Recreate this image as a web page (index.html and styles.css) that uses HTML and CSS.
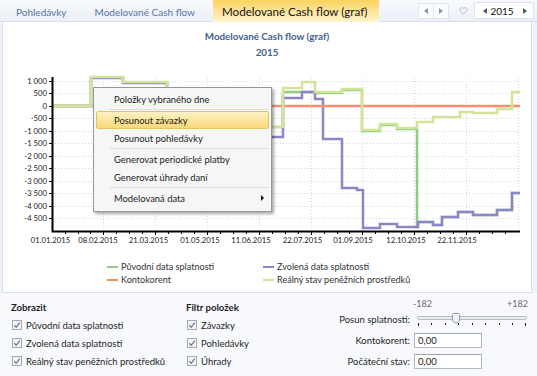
FILE: index.html
```html
<!DOCTYPE html>
<html lang="cs">
<head>
<meta charset="utf-8">
<title>Modelované Cash flow (graf)</title>
<link rel="stylesheet" href="styles.css">
</head>
<body>
<div class="app">
  <div class="tabbar">
    <div class="tab">Pohledávky</div>
    <div class="tab">Modelované Cash flow</div>
    <div class="tab active">Modelované Cash flow (graf)</div>
    <div class="nav">
      <div class="btngroup">
        <span class="nb"><svg width="4" height="6" viewBox="0 0 4 6"><path d="M4 0 L0 3 L4 6 Z" fill="#8d98a8"/></svg></span>
        <span class="nb"><svg width="4" height="6" viewBox="0 0 4 6"><path d="M0 0 L4 3 L0 6 Z" fill="#8d98a8"/></svg></span>
      </div>
      <span class="heart"><svg width="9" height="8" viewBox="0 0 9 8"><path d="M4.5 7.2 L1.2 3.9 A1.9 1.9 0 0 1 4.5 1.6 A1.9 1.9 0 0 1 7.8 3.9 Z" fill="none" stroke="#b7c0cf" stroke-width="1"/></svg></span>
      <div class="year">
        <svg width="4" height="6" viewBox="0 0 4 6"><path d="M4 0 L0 3 L4 6 Z" fill="#4b5563"/></svg>
        <span class="yv">2015</span>
        <svg width="4" height="6" viewBox="0 0 4 6"><path d="M0 0 L4 3 L0 6 Z" fill="#4b5563"/></svg>
      </div>
    </div>
  </div>

  <div class="chart">
    <div class="title">Modelované Cash flow (graf)</div>
    <div class="title">2015</div>
    <svg class="plot" width="528" height="190" viewBox="3 60 528 190">
      <g stroke="#d6d6d6" stroke-width="1" stroke-dasharray="1 2" fill="none">
        <path d="M52 81.5H520M52 93.5H520M52 106.5H520M52 118.5H520M52 131.5H520M52 143.5H520M52 156.5H520M52 168.5H520M52 181.5H520M52 193.5H520M52 206.5H520M52 218.5H520"/>
        <path d="M103.5 78V231M155.5 78V231M207.5 78V231M259.5 78V231M311.5 78V231M362.5 78V231M414.5 78V231M466.5 78V231M518.5 78V231"/>
      </g>
      <g fill="none" stroke-width="2.5" stroke-linejoin="miter">
        <path stroke="#8fcd86" d="M52 106H91V77.5H123V82.5H167V113H271V127H283V92H315V93H342V90H362V131H380V125H397V129H417V227H418V222H433V225H442V217H458V212H473V215H497V210H512V193H520"/>
        <path stroke="#8a86c7" d="M52 106H91V78H123V83H167V137H283V98H302V92H315V99H323V139H342V188H357V190H363V228H380V224H397V227H418V222H433V225H442V217H458V212H473V215H497V210H512V193H520"/>
        <path stroke="#f2906f" d="M52 106H520"/>
        <path stroke="#d2e497" d="M52 106H91V77H123V82H167V113H271V127H283V88H302V82H315V92H342V89H362V130H380V124H397V128H417V122H433V117H460V112H473V113H497V109H512V92H520"/>
      </g>
      <g stroke="#000" stroke-width="1" fill="none">
        <path d="M49 81.5H52M49 93.5H52M49 106.5H52M49 118.5H52M49 131.5H52M49 143.5H52M49 156.5H52M49 168.5H52M49 181.5H52M49 193.5H52M49 206.5H52M49 218.5H52"/>
        <path d="M65.5 231V234M78.5 231V234M90.5 231V234M103.5 231V235M116.5 231V234M129.5 231V234M142.5 231V234M155.5 231V235M168.5 231V234M181.5 231V234M194.5 231V234M207.5 231V235M220.5 231V234M233.5 231V234M246.5 231V234M259.5 231V235M272.5 231V234M285.5 231V234M298.5 231V234M311.5 231V235M324.5 231V234M337.5 231V234M349.5 231V234M362.5 231V235M375.5 231V234M388.5 231V234M401.5 231V234M414.5 231V235M427.5 231V234M440.5 231V234M453.5 231V234M466.5 231V235M479.5 231V234M492.5 231V234M505.5 231V234"/>
      </g>
      <path d="M52.5 77V231.5H520" stroke="#000" stroke-width="2" fill="none"/>
      <g class="ylab" text-anchor="end">
        <text x="47" y="84.3">1 000</text>
        <text x="47" y="96.3">500</text>
        <text x="47" y="109.3">0</text>
        <text x="47" y="121.3">-500</text>
        <text x="47" y="134.3">-1 000</text>
        <text x="47" y="146.3">-1 500</text>
        <text x="47" y="159.3">-2 000</text>
        <text x="47" y="171.3">-2 500</text>
        <text x="47" y="184.3">-3 000</text>
        <text x="47" y="196.3">-3 500</text>
        <text x="47" y="209.3">-4 000</text>
        <text x="47" y="221.3">-4 500</text>
      </g>
      <g class="xlab" text-anchor="middle">
        <text x="50.5" y="243">01.01.2015</text>
        <text x="98" y="243">08.02.2015</text>
        <text x="148.5" y="243">21.03.2015</text>
        <text x="200" y="243">01.05.2015</text>
        <text x="251" y="243">11.06.2015</text>
        <text x="302.5" y="243">22.07.2015</text>
        <text x="353" y="243">01.09.2015</text>
        <text x="406" y="243">12.10.2015</text>
        <text x="457" y="243">22.11.2015</text>
      </g>
    </svg>
    <div class="legend">
      <div class="li"><i class="sw green"></i>Původní data splatnosti</div>
      <div class="li"><i class="sw purple"></i>Zvolená data splatnosti</div>
      <div class="li"><i class="sw orange"></i>Kontokorent</div>
      <div class="li"><i class="sw yellow"></i>Reálný stav peněžních prostředků</div>
    </div>

    <div class="menu">
      <div class="mi">Položky vybraného dne</div>
      <div class="sep"></div>
      <div class="mi hot">Posunout závazky</div>
      <div class="mi">Posunout pohledávky</div>
      <div class="sep"></div>
      <div class="mi">Generovat periodické platby</div>
      <div class="mi">Generovat úhrady daní</div>
      <div class="sep"></div>
      <div class="mi sub">Modelovaná data<svg width="3" height="6" viewBox="0 0 3 6"><path d="M0 0 L3 3 L0 6 Z" fill="#111"/></svg></div>
    </div>
  </div>

  <div class="bottom">
    <div class="col col1">
      <div class="hd">Zobrazit</div>
      <label class="cb"><svg class="box" width="10" height="10" viewBox="0 0 10 10"><rect x="0.5" y="0.5" width="9" height="9" fill="#f3f5f8" stroke="#a3a9b3"/><path d="M2.3 5.2 L4.2 7.3 L7.8 2.6" fill="none" stroke="#6d7c95" stroke-width="1.3"/></svg>Původní data splatnosti</label>
      <label class="cb"><svg class="box" width="10" height="10" viewBox="0 0 10 10"><rect x="0.5" y="0.5" width="9" height="9" fill="#f3f5f8" stroke="#a3a9b3"/><path d="M2.3 5.2 L4.2 7.3 L7.8 2.6" fill="none" stroke="#6d7c95" stroke-width="1.3"/></svg>Zvolená data splatnosti</label>
      <label class="cb"><svg class="box" width="10" height="10" viewBox="0 0 10 10"><rect x="0.5" y="0.5" width="9" height="9" fill="#f3f5f8" stroke="#a3a9b3"/><path d="M2.3 5.2 L4.2 7.3 L7.8 2.6" fill="none" stroke="#6d7c95" stroke-width="1.3"/></svg>Reálný stav peněžních prostředků</label>
    </div>
    <div class="col col2">
      <div class="hd">Filtr položek</div>
      <label class="cb"><svg class="box" width="10" height="10" viewBox="0 0 10 10"><rect x="0.5" y="0.5" width="9" height="9" fill="#f3f5f8" stroke="#a3a9b3"/><path d="M2.3 5.2 L4.2 7.3 L7.8 2.6" fill="none" stroke="#6d7c95" stroke-width="1.3"/></svg>Závazky</label>
      <label class="cb"><svg class="box" width="10" height="10" viewBox="0 0 10 10"><rect x="0.5" y="0.5" width="9" height="9" fill="#f3f5f8" stroke="#a3a9b3"/><path d="M2.3 5.2 L4.2 7.3 L7.8 2.6" fill="none" stroke="#6d7c95" stroke-width="1.3"/></svg>Pohledávky</label>
      <label class="cb"><svg class="box" width="10" height="10" viewBox="0 0 10 10"><rect x="0.5" y="0.5" width="9" height="9" fill="#f3f5f8" stroke="#a3a9b3"/><path d="M2.3 5.2 L4.2 7.3 L7.8 2.6" fill="none" stroke="#6d7c95" stroke-width="1.3"/></svg>Úhrady</label>
    </div>
    <div class="params">
      <span></span>
      <div class="range"><span>-182</span><span>+182</span></div>
      <span class="lbl">Posun splatnosti:</span>
      <svg class="slider" width="114" height="20" viewBox="0 0 114 20">
        <rect x="3.5" y="5.5" width="109" height="3" rx="1" fill="#e9ecf0" stroke="#b5bcc6"/>
        <path d="M4.5 12V15M17.5 12V14M31.5 12V14M44.5 12V14M58.5 12V14M71.5 12V14M85.5 12V14M98.5 12V14M111.5 12V15" stroke="#222" stroke-width="1"/>
        <path d="M39.5 2.5 H44.5 Q45.5 2.5 45.5 3.5 V10 L42 12.5 L38.5 10 V3.5 Q38.5 2.5 39.5 2.5 Z" fill="#eef2f7" stroke="#8e9bb0"/>
      </svg>
      <span class="lbl">Kontokorent:</span>
      <div class="inp">0,00</div>
      <span class="lbl">Počáteční stav:</span>
      <div class="inp">0,00</div>
    </div>
  </div>
</div>
</body>
</html>
```

FILE: styles.css
```css
html, body {
  margin: 0;
  padding: 0;
}
body {
  background: #eef3f9;
  font-family: Lato, "Open Sans", sans-serif;
  color: #1e1e1e;
}
.app {
  width: 537px;
  height: 376px;
  display: flex;
  flex-direction: column;
  overflow: hidden;
}

/* tab bar */
.tabbar {
  height: 21px;
  border-bottom: 1px solid #d6dfea;
  background: linear-gradient(#f8fafd, #ebf0f7);
  display: flex;
  align-items: stretch;
  padding-left: 2px;
}
.tab {
  padding: 2px 14px 0 14px;
  font-size: 10px;
  color: #5675a4;
  display: flex;
  align-items: center;
  white-space: nowrap;
}
.tab.active {
  height: 22px;
  box-sizing: border-box;
  margin-left: 4px;
  padding: 1px 12px 0 9px;
  font-size: 11.6px;
  color: #141414;
  background: linear-gradient(#fbd25e, #fde6a0 55%, #fff3ca);
}
.nav {
  margin-left: auto;
  display: flex;
  align-items: center;
  padding-right: 3px;
}
.btngroup {
  display: flex;
  border: 1px solid #dfe5ee;
  background: #f9fbfd;
}
.nb {
  width: 14px;
  height: 14px;
  display: flex;
  align-items: center;
  justify-content: center;
}
.nb + .nb {
  border-left: 1px solid #e4e9f0;
}
.heart {
  margin-left: 10px;
  width: 9px;
  height: 8px;
  display: flex;
}
.year {
  margin-left: 6px;
  width: 60px;
  height: 17px;
  box-sizing: border-box;
  border: 1px solid #dde4ee;
  background: #fff;
  display: flex;
  align-items: center;
  justify-content: space-between;
  padding: 0 6px 0 8px;
}
.yv {
  font-size: 10px;
  color: #111;
  margin-left: -6px;
}

/* chart */
.chart {
  position: relative;
  margin: 0 5px 0 2px;
  background: #fff;
  border: 1px solid #d6dfea;
  border-top: none;
  padding: 6px 0 6px 0;
}
.title {
  text-align: center;
  font-size: 9.8px;
  line-height: 16px;
  font-weight: bold;
  color: #3f5f8e;
}
.plot {
  display: block;
}
.plot text {
  font-family: Lato, "Open Sans", sans-serif;
  font-size: 7.7px;
  fill: #222;
}
.legend {
  display: grid;
  grid-template-columns: 156px 200px;
  margin-left: 104px;
  padding-top: 10px;
}
.li {
  height: 13px;
  display: flex;
  align-items: center;
  font-size: 9.1px;
  color: #333;
  white-space: nowrap;
}
.sw {
  display: inline-block;
  width: 11px;
  height: 2px;
  margin-right: 3px;
}
.sw.green { background: #8fcd86; }
.sw.purple { background: #8a86c7; }
.sw.orange { background: #f2906f; }
.sw.yellow { background: #d2e497; }

/* context menu */
.menu {
  position: absolute;
  left: 90px;
  top: 65px;
  width: 173px;
  padding: 2px 2px 4px 2px;
  background: #f6f6f6;
  border: 1px solid #979797;
  box-shadow: 2px 2px 3px rgba(0, 0, 0, 0.35);
}
.mi {
  height: 18px;
  box-sizing: border-box;
  padding-left: 18px;
  padding-right: 5px;
  display: flex;
  align-items: center;
  font-size: 9.4px;
  color: #1b1b1b;
  white-space: nowrap;
}
.mi.hot {
  background: linear-gradient(#fdf1c6, #f9d878);
  border: 1px solid #e7c461;
  border-radius: 2px;
  padding-left: 17px;
}
.mi.sub {
  justify-content: space-between;
}
.sep {
  height: 0;
  margin: 1px 0 1px 14px;
  border-top: 1px solid #dedede;
}

/* bottom panel */
.bottom {
  flex: 1;
  display: flex;
  padding: 4px 9px 0 11px;
  background: #f7f9fc;
}
.col {
  padding-top: 4px;
}
.col1 {
  width: 175px;
}
.col2 {
  width: 110px;
}
.hd {
  font-size: 9.6px;
  line-height: 13px;
  font-weight: bold;
  color: #1e1e1e;
  margin-bottom: 2px;
}
.cb {
  height: 18px;
  display: flex;
  align-items: center;
  font-size: 9.5px;
  color: #1e1e1e;
  white-space: nowrap;
}
.cb .box {
  margin-left: 1px;
  margin-right: 4px;
  flex: none;
}
.params {
  margin-left: auto;
  display: grid;
  grid-template-columns: auto 114px;
  grid-template-rows: 12px 20px 22px 20px;
  column-gap: 4px;
  align-items: center;
}
.range {
  display: flex;
  justify-content: space-between;
  font-size: 9px;
  color: #6b6b6b;
  margin-left: -1px;
}
.lbl {
  text-align: right;
  font-size: 9.5px;
  color: #1e1e1e;
  white-space: nowrap;
}
.slider {
  display: block;
  align-self: start;
  margin-top: 2px;
}
.inp {
  width: 68px;
  height: 15px;
  box-sizing: border-box;
  border: 1px solid #b3b8c0;
  border-top-color: #9ea5ae;
  background: #fff;
  font-size: 9.5px;
  line-height: 13px;
  padding-left: 3px;
  color: #1e1e1e;
}
```
